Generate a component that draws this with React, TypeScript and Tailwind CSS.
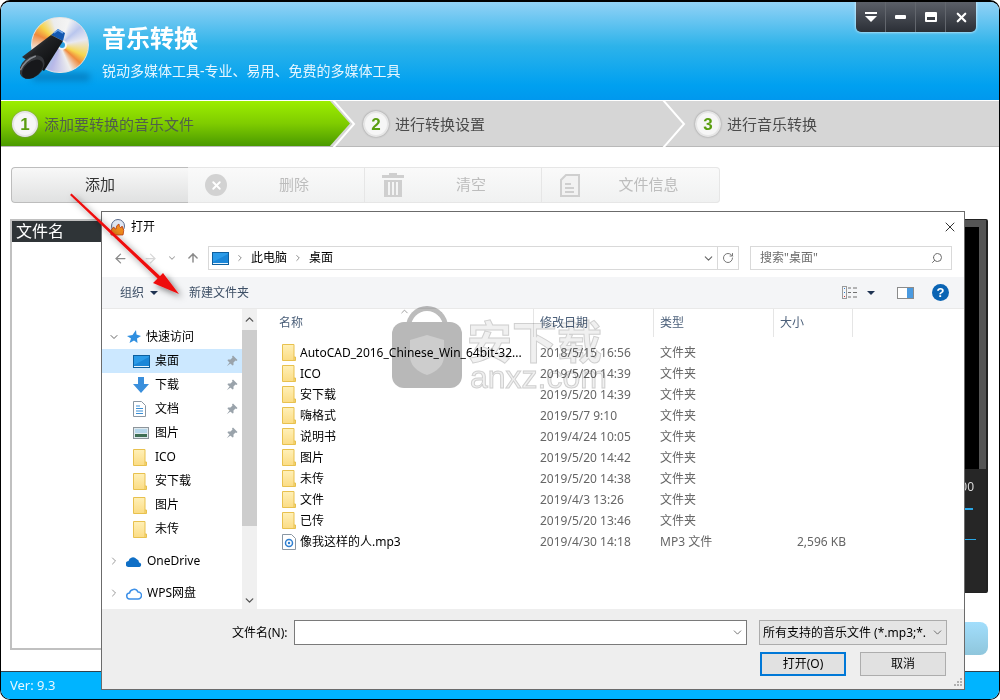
import { ArrowLeft, ArrowRight, ArrowUp, ChevronDown, ChevronRight, ChevronUp, RotateCw, Search, X } from "lucide-react"

const files = [
  ["AutoCAD_2016_Chinese_Win_64bit-32...", "2018/5/15 16:56"],
  ["ICO", "2019/5/20 14:39"],
  ["安下载", "2019/5/20 14:39"],
  ["嗨格式", "2019/5/7 9:10"],
  ["说明书", "2019/4/24 10:05"],
  ["图片", "2019/5/20 14:42"],
  ["未传", "2019/5/20 14:38"],
  ["文件", "2019/4/3 13:26"],
  ["已传", "2019/5/20 13:46"],
]

const Folder = () => (
  <svg width="14" height="17" viewBox="0 0 14 17" className="shrink-0">
    <defs>
      <linearGradient id="fd" x1="0" y1="0" x2="0" y2="1">
        <stop offset="0" stopColor="#fff0b8" />
        <stop offset="1" stopColor="#fbdc84" />
      </linearGradient>
    </defs>
    <path d="M.5.5h11.5v12.5h1.5v3.500H.5z" fill="url(#fd)" stroke="#e8c14e" />
    <path d="M12 13v3" stroke="#e8c14e" />
  </svg>
)

const Monitor = () => (
  <svg width="17" height="13" viewBox="0 0 17 13" className="shrink-0">
    <rect x=".5" y=".5" width="16" height="12" fill="#2b9be8" stroke="#0d5f9e" />
    <path d="M1 10 16 2v9H1z" fill="#1a86d8" />
    <path d="M1 11.500h15" stroke="#e8f4fc" />
  </svg>
)

const Pin = () => (
  <svg width="12" height="12" viewBox="0 0 12 12" fill="#9aa3ab">
    <path d="M7 .5 11.500 5 10.500 6 9.500 5.500 7.500 7.500 7.500 10 6.500 10.500 1.500 5.500 2 4.500 4.500 4.500 6.500 2.500 6 1.500zM3.500 7.500.8 11.200 4.500 8.500z" />
  </svg>
)

const Download = () => (
  <svg width="16" height="16" viewBox="0 0 16 16">
    <path d="M5 0h6v7h5l-8 9-8-9h5z" fill="#3a8fdc" />
  </svg>
)

const Doc = () => (
  <svg width="13" height="16" viewBox="0 0 13 16">
    <path d="M.5.5h8l4 4v11H.5z" fill="#fff" stroke="#8a97a3" />
    <path d="M3 5h4M3 7.500h7M3 10h7M3 12.500h7" stroke="#3b8fd6" />
  </svg>
)

const Picture = () => (
  <svg width="16" height="12" viewBox="0 0 16 12">
    <rect x=".5" y=".5" width="15" height="11" fill="#dfe9ee" stroke="#8d959b" />
    <path d="M2 7h12v3H2z" fill="#3f6f55" />
    <path d="M2 2h12v4H2z" fill="#b5d6ea" />
  </svg>
)

const Star = () => (
  <svg width="14" height="14" viewBox="0 0 14 14">
    <path d="M9 0 9.500 4.500 14 6 10 8.500 10.500 13 7 10.500 2.500 13 4 8.500 0 6 5.500 5z" fill="#2f8fe0" />
  </svg>
)

const OneDrive = () => (
  <svg width="16" height="11" viewBox="0 0 16 11">
    <path d="M3 11a3 3 0 0 1-.5-6A4.500 4.500 0 0 1 10.500 3 3.500 3.500 0 0 1 13 6.500 2.300 2.300 0 0 1 13.500 11z" fill="#0f6fc6" />
  </svg>
)

const WpsCloud = () => (
  <svg width="16" height="13" viewBox="0 0 16 13" fill="none" stroke="#3d90e8" strokeWidth="1.500">
    <path d="M4 12a3 3 0 0 1-.5-6A4.500 4.500 0 0 1 12 5a3.500 3.500 0 0 1 0 7z" />
  </svg>
)

const SideRow = ({ icon, label, pin, active }: { icon: React.ReactNode; label: string; pin?: boolean; active?: boolean }) => (
  <div className={`flex h-6 items-center pl-[31px] pr-[4px] ${active ? "bg-[#cce8ff]" : ""}`}>
    <span className="flex w-[22px] shrink-0 justify-start">{icon}</span>
    <span className="flex-1 text-black">{label}</span>
    {pin && <Pin />}
  </div>
)

const DiscLogo = () => (
  <div className="relative h-[72px] w-[72px] shrink-0">
    <div className="absolute left-[12px] top-[56px] h-[8px] w-[58px] rounded-full bg-[#005f9e]/50 blur-[3px]" />
    <div className="absolute left-[11px] top-0 h-[56px] w-[58px] rounded-full border border-[#e4e4e4] bg-[conic-gradient(from_20deg,#f4f4f4,#b9c6ee_8%,#e8e8f2_16%,#f7d750_26%,#f08a3c_31%,#eeeeee_38%,#b8b8e8_50%,#9fc4ea_56%,#f2f2f2_66%,#f08a3c_76%,#f7d34a_82%,#ececec_90%,#f4f4f4)]" />
    <svg width="72" height="72" viewBox="0 0 72 72" className="absolute left-0 top-0">
      <defs>
        <linearGradient id="tube" x1="0" y1="0" x2="1" y2="1">
          <stop offset="0" stopColor="#666a70" />
          <stop offset="0.4" stopColor="#1f2124" />
          <stop offset="1" stopColor="#050506" />
        </linearGradient>
      </defs>
      <circle cx="42" cy="28" r="5" fill="#f4f4f4" />
      <circle cx="42" cy="28" r="3" fill="#2a9fe0" />
      <path d="M31 18 38 12 45 16 43 24z" fill="#1358b0" />
      <path d="M34 16 38 13 43 16" stroke="#6ea4e6" strokeWidth="1.500" fill="none" />
      <path d="M31 18 43 24 24 54 2 40z" fill="url(#tube)" />
      <g transform="rotate(-40 12 50)">
        <ellipse cx="12" cy="50" rx="14" ry="10" fill="#34373b" />
        <ellipse cx="11" cy="52" rx="12" ry="7.500" fill="#17181b" />
        <path d="M1 45q10-5 21-1" stroke="#85898f" strokeWidth="1.500" fill="none" />
      </g>
    </svg>
  </div>
)

const StepBadge = ({ n }: { n: number }) => (
  <span className="flex h-[26px] w-[26px] shrink-0 items-center justify-center rounded-full border-2 border-[#e6e6e6] bg-[#f6f6f6] text-[17px] font-bold leading-none text-[#5a9e10] shadow-[0_0_2px_#888] [font-family:'Liberation_Sans',sans-serif]">
    {n}
  </span>
)

const Chevron = ({ className }: { className: string }) => (
  <svg width="24" height="46" viewBox="0 0 24 46" className={`absolute top-0 ${className}`} fill="none" stroke="#fff" strokeWidth="2">
    <path d="M1 -1 22 23 1 47" />
  </svg>
)

const ToolButton = ({ icon, label }: { icon: React.ReactNode; label: string }) => (
  <div className="flex h-full w-[177px] items-center border-r border-[#e6e6e6] pl-[16px] pr-[4px] last:border-r-0">
    <span className="flex w-[24px] justify-center">{icon}</span>
    <span className="flex-1 pb-[2px] text-center text-[#bdbdbd]">{label}</span>
  </div>
)

const RedArrow = () => (
  <svg width="1000" height="700" className="pointer-events-none absolute left-0 top-0">
    <defs>
      <filter id="as" x="-20%" y="-20%" width="150%" height="150%">
        <feDropShadow dx="3" dy="3" stdDeviation="3" floodColor="#000" floodOpacity="0.5" />
      </filter>
    </defs>
    <path filter="url(#as)" d="M70 195 71.500 193.500 160 276 163 273 179 294 153 283 157.500 278.500z" fill="#ee1111" />
  </svg>
)

const Watermark = () => (
  <div className="pointer-events-none absolute left-[392px] top-[306px] flex items-start gap-[5px] mix-blend-multiply">
    <div className="relative h-[82px] w-[70px]">
      <div className="absolute left-[14px] top-0 h-[34px] w-[42px] rounded-t-[21px] border-[5px] border-b-0 border-[#bcbcbc]" />
      <div className="absolute bottom-0 left-0 flex h-[66px] w-[70px] items-center justify-center rounded-[12px] bg-[#b8b8b8]">
        <svg width="36" height="42" viewBox="0 0 36 42">
          <path d="M18 1 35 6v16q0 13-17 19Q1 35 1 22V6z" fill="#cdcdcd" />
        </svg>
      </div>
    </div>
    <div className="flex flex-col text-[#f0f0f0] [-webkit-text-stroke:1px_#d0d0d0]">
      <span className="mt-[12px] text-[45px] font-bold leading-[48px]">安下载</span>
      <span className="-mt-[4px] ml-[3px] text-[32px] leading-[30px] [font-family:'Liberation_Sans',sans-serif]">anxz.com</span>
    </div>
  </div>
)

const OpenDialog = () => (
  <div className="absolute left-[101px] top-[211px] flex h-[479px] w-[864px] flex-col border border-[#6b6b6b] bg-white text-[12px] text-black">
    <div className="flex h-[30px] shrink-0 items-center pl-[8px] pr-[6px]">
      <svg width="16" height="17" viewBox="0 0 16 17" className="mr-[5px]">
        <circle cx="8" cy="7" r="6.500" fill="#dfe6f2" stroke="#5a6a8a" />
        <path d="M1 16q-1-6 3-8 0 2 2 2 0-4 3-5 0 3 2 4l1-2q3 4 1 9z" fill="#f08a1c" stroke="#b5300e" strokeWidth=".7" />
      </svg>
      <span className="flex-1">打开</span>
      <X size={16} strokeWidth={1.2} />
    </div>

    <div className="flex h-[35px] shrink-0 items-start pl-[11px] pr-[12px] pt-[4px]">
      <div className="flex h-[24px] w-[95px] items-center text-[#8a8a8a]">
        <ArrowLeft size={15} strokeWidth={2} />
        <ArrowRight size={15} strokeWidth={2} className="ml-[15px] text-[#d8d8d8]" />
        <ChevronDown size={10} strokeWidth={2.500} className="ml-[9px] text-[#a0a0a0]" />
        <ArrowUp size={14} strokeWidth={2.500} className="ml-[9px]" />
      </div>
      <div className="flex h-[24px] w-[531px] items-center border border-[#d9d9d9] pl-[3px]">
        <Monitor />
        <ChevronRight size={10} strokeWidth={2} className="ml-[6px] text-[#777]" />
        <span className="ml-[6px]">此电脑</span>
        <ChevronRight size={10} strokeWidth={2} className="ml-[6px] text-[#777]" />
        <span className="ml-[6px] flex-1">桌面</span>
        <ChevronDown size={13} strokeWidth={2} className="mr-[2px] text-[#666]" />
        <span className="flex h-full w-[21px] items-center justify-center border-l border-[#d9d9d9] text-[#777]">
          <RotateCw size={12} strokeWidth={2} />
        </span>
      </div>
      <div className="ml-[11px] flex h-[24px] w-[202px] items-center justify-between border border-[#d9d9d9] pl-[9px] pr-[8px] text-[#6d6d6d]">
        <span>搜索"桌面"</span>
        <Search size={12} strokeWidth={2} className="-scale-x-100" />
      </div>
    </div>

    <div className="flex h-[32px] shrink-0 items-center border-b border-[#e9e9e9] bg-[#f4f5f7] pl-[18px] pr-[15px] text-[#3d4f66]">
      <span>组织</span>
      <span className="ml-[6px] h-0 w-0 border-x-[4px] border-t-[4px] border-x-transparent border-t-[#1f3352]" />
      <span className="ml-[31px] flex-1">新建文件夹</span>
      <svg width="16" height="13" viewBox="0 0 16 13" fill="none">
        <rect x=".5" y=".5" width="4" height="12" stroke="#9a9a9a" />
        <path d="M6 2h3M11 2h4M6 6.500h3M11 6.500h4M6 11h3M11 11h4" stroke="#707070" />
        <path d="M2 2.500h1" stroke="#2f7fd0" />
        <path d="M2 6.500h1" stroke="#2f7fd0" />
        <path d="M2 10.500h1" stroke="#d03030" />
      </svg>
      <span className="ml-[9px] h-0 w-0 border-x-[4px] border-t-[4px] border-x-transparent border-t-[#1f3352]" />
      <span className="ml-[22px] flex h-[12px] w-[17px] border border-[#8b8b8b] bg-white">
        <span className="ml-auto w-[6px] bg-[#4a9ae0]" />
      </span>
      <span className="ml-[18px] flex h-[17px] w-[17px] items-center justify-center rounded-full bg-[#0a64b4] text-[13px] font-bold leading-none text-white [font-family:'Liberation_Sans',sans-serif]">
        ?
      </span>
    </div>

    <div className="flex min-h-0 flex-1">
      <aside className="flex w-[140px] shrink-0 flex-col overflow-hidden pt-[16px]">
        <div className="flex h-6 items-center pl-[6px]">
          <ChevronDown size={12} strokeWidth={2} className="mr-[7px] text-[#666]" />
          <Star />
          <span className="ml-[5px]">快速访问</span>
        </div>
        <SideRow icon={<Monitor />} label="桌面" pin active />
        <SideRow icon={<Download />} label="下载" pin />
        <SideRow icon={<Doc />} label="文档" pin />
        <SideRow icon={<Picture />} label="图片" pin />
        <SideRow icon={<Folder />} label="ICO" />
        <SideRow icon={<Folder />} label="安下载" />
        <SideRow icon={<Folder />} label="图片" />
        <SideRow icon={<Folder />} label="未传" />
        <div className="mt-[8px] flex h-6 items-center pl-[6px]">
          <ChevronRight size={12} strokeWidth={2} className="mr-[6px] text-[#999]" />
          <OneDrive />
          <span className="ml-[5px]">OneDrive</span>
        </div>
        <div className="mt-[8px] flex h-6 items-center pl-[6px]">
          <ChevronRight size={12} strokeWidth={2} className="mr-[6px] text-[#999]" />
          <WpsCloud />
          <span className="ml-[5px]">WPS网盘</span>
        </div>
      </aside>

      <div className="flex w-[15px] shrink-0 flex-col bg-[#f0f0f0] text-[#555]">
        <ChevronUp size={13} strokeWidth={2.500} className="mx-auto mt-[4px]" />
        <div className="mt-[4px] h-[196px] bg-[#cdcdcd]" />
        <ChevronDown size={13} strokeWidth={2.500} className="mx-auto mt-auto mb-[2px]" />
      </div>

      <div className="ml-[3px] min-w-0 flex-1">
        <div className="relative grid h-[28px] grid-cols-[273px_120px_120px_80px] items-center text-[#4c607a]">
          <span className="pl-[19px]">名称</span>
          <span className="flex h-full items-center border-l border-[#e5e5e5] pl-[6px]">修改日期</span>
          <span className="flex h-full items-center border-l border-[#e5e5e5] pl-[6px]">类型</span>
          <span className="flex h-full items-center border-x border-[#e5e5e5] pl-[6px]">大小</span>
          <ChevronUp size={11} strokeWidth={1.500} className="absolute left-[139px] top-[-3px] text-[#777]" />
        </div>
        <div className="pt-[5px]">
          {files.map(([name, date]) => (
            <div key={name} className="grid h-[21px] grid-cols-[273px_120px_120px_80px] items-center text-[#666]">
              <span className="flex items-center gap-[4px] pl-[22px] text-black">
                <Folder />
                {name}
              </span>
              <span className="pl-[7px]">{date}</span>
              <span className="pl-[7px]">文件夹</span>
              <span />
            </div>
          ))}
          <div className="grid h-[21px] grid-cols-[273px_120px_120px_80px] items-center text-[#666]">
            <span className="flex items-center gap-[4px] pl-[22px] text-black">
              <svg width="14" height="16" viewBox="0 0 14 16" className="shrink-0">
                <path d="M.5.500h9l4 4v11H.5z" fill="#fff" stroke="#8a97a3" />
                <circle cx="7" cy="9" r="3.500" fill="none" stroke="#2f7fd0" strokeWidth="1.500" />
                <circle cx="7" cy="9" r="1.200" fill="#2f7fd0" />
              </svg>
              像我这样的人.mp3
            </span>
            <span className="pl-[7px]">2019/4/30 14:18</span>
            <span className="pl-[7px]">MP3 文件</span>
            <span className="pr-[7px] text-right">2,596 KB</span>
          </div>
        </div>
      </div>
    </div>

    <div className="relative flex h-[80px] shrink-0 flex-col bg-[#eeeeee] pl-[130px] pr-[17px] pt-[11px]">
      <div className="flex items-center">
        <span className="w-[62px]">文件名(N):</span>
        <div className="flex h-[25px] w-[453px] items-center justify-end border border-[#7a7a7a] bg-white pr-[2px] text-[#555]">
          <ChevronDown size={13} strokeWidth={1.500} />
        </div>
        <div className="ml-[12px] flex h-[25px] flex-1 items-center justify-between border border-[#acacac] bg-[#e5e5e5] pl-[3px] pr-[2px]">
          <span className="whitespace-nowrap">所有支持的音乐文件 (*.mp3;*.</span>
          <ChevronDown size={13} strokeWidth={1.500} className="text-[#555]" />
        </div>
      </div>
      <div className="mr-px mt-[7px] flex justify-end gap-[14px]">
        <button className="h-[24px] w-[86px] border-2 border-[#0078d7] bg-[#e1e1e1]">打开(O)</button>
        <button className="h-[24px] w-[86px] border border-[#adadad] bg-[#e1e1e1]">取消</button>
      </div>
      <svg width="10" height="10" viewBox="0 0 10 10" className="absolute bottom-[1px] right-[1px]" fill="#b0b0b0">
        <path d="M7 0h2v2H7zM4 3h2v2H4zM7 3h2v2H7zM1 6h2v2H1zM4 6h2v2H4zM7 6h2v2H7z" />
      </svg>
    </div>
  </div>
)

export default function App() {
  return (
    <div className="relative h-[700px] w-[1000px] overflow-hidden bg-white [font-family:'Noto_Sans','Noto_Sans_CJK_SC',sans-serif]">
      <div className="flex h-full flex-col overflow-hidden rounded-[10px] border border-t-2 border-black">
        <header className="flex h-[98px] shrink-0 items-start justify-between bg-[linear-gradient(#92d2f6,#2db3ea_45%,#00a0f0_85%,#0098ee)] pl-[19px] pr-[23px]">
          <div className="flex items-start">
            <div className="mt-[15px]">
              <DiscLogo />
            </div>
            <div className="ml-[10px] flex flex-col text-white">
              <span className="mt-[18px] text-[24px] font-bold leading-[36px]">音乐转换</span>
              <span className="mt-[5px] text-[14px] leading-[20px] text-[#e6f6ff]">锐动多媒体工具-专业、易用、免费的多媒体工具</span>
            </div>
          </div>
          <div className="flex h-[30px] rounded-b-[5px] bg-[linear-gradient(#5b5f68,#2b2f36)] shadow-[0_0_3px_#fff]">
            <span className="flex w-[30px] flex-col items-center justify-center gap-[2px] border-r border-[#62666d]">
              <span className="h-[2px] w-[12px] bg-white" />
              <span className="h-0 w-0 border-x-[6px] border-t-[6px] border-x-transparent border-t-white" />
            </span>
            <span className="flex w-[30px] items-center justify-center border-r border-[#62666d]">
              <span className="h-[4px] w-[11px] rounded-[1px] bg-white" />
            </span>
            <span className="flex w-[30px] items-center justify-center border-r border-[#62666d]">
              <span className="flex h-[10px] w-[12px] items-end rounded-[1px] bg-white p-[2px] pt-0">
                <span className="h-[3px] w-full bg-[#3a3e45]" />
              </span>
            </span>
            <span className="flex w-[30px] items-center justify-center">
              <X size={15} strokeWidth={3.500} className="text-white" />
            </span>
          </div>
        </header>

        <nav className="relative mt-px flex h-[46px] shrink-0 border-b border-[#b9b9b9] bg-[#d6d6d6] text-[15px] text-[#4c4c4c]">
          <div className="flex w-[350px] shrink-0 items-center gap-[6px] bg-[linear-gradient(#9cee00,#7fcc00_50%,#4a9a00)] pl-[11px] pt-px text-[#50604a] [clip-path:polygon(0_0,329px_0,349px_50%,329px_100%,0_100%)]">
            <StepBadge n={1} />
            <span>添加要转换的音乐文件</span>
          </div>
          <Chevron className="left-[331px]" />
          <div className="ml-[12px] flex w-[320px] shrink-0 items-center gap-[6px] pt-px">
            <StepBadge n={2} />
            <span>进行转换设置</span>
          </div>
          <Chevron className="left-[661px]" />
          <div className="flex items-center gap-[6px] pl-[12px] pt-px">
            <StepBadge n={3} />
            <span>进行音乐转换</span>
          </div>
        </nav>

        <div className="flex min-h-0 flex-1 flex-col bg-white pl-[9px] pr-[11px]">
          <div className="ml-px mt-[20px] flex h-[36px] w-[709px] shrink-0 overflow-hidden rounded-[4px] bg-[linear-gradient(#fafafa,#f0f1f1)] text-[15px] shadow-[inset_0_0_0_1px_#e6e6e6]">
            <div className="flex h-full w-[177px] items-center justify-center rounded-l-[4px] border border-[#bdbdbd] border-r-0 bg-[linear-gradient(#f8f8f8,#e0e1e1)] pb-[2px] text-[#333]">
              添加
            </div>
            <ToolButton
              label="删除"
              icon={
                <span className="flex h-[22px] w-[22px] items-center justify-center rounded-full bg-[#d2d2d2]">
                  <X size={13} strokeWidth={3.500} className="text-white" />
                </span>
              }
            />
            <ToolButton
              label="清空"
              icon={
                <svg width="22" height="24" viewBox="0 0 22 24" fill="#cfcfcf">
                  <path d="M7 0h8v2h7v3H0V2h7zM2 7h18v17H2zM6 9v13h2V9zM10 9v13h2V9zM14 9v13h2V9z" fillRule="evenodd" />
                </svg>
              }
            />
            <ToolButton
              label="文件信息"
              icon={
                <svg width="20" height="23" viewBox="0 0 20 23">
                  <path d="M6 1h13v21H1V6z" fill="#f2f2f2" stroke="#cfcfcf" strokeWidth="2" />
                  <path d="M5 9h6v2H5zM5 13h9v2H5zM5 17h9v2H5z" fill="#cfcfcf" />
                </svg>
              }
            />
          </div>

          <div className="mt-[16px] flex min-h-0 items-start justify-between">
            <div className="h-[431px] w-[900px] border-2 border-[#c0c0c0]">
              <div className="h-[21px] w-[100px] bg-[#2f3437] pl-[4px] text-[16px] leading-[21px] text-white">文件名</div>
            </div>
            <div className="flex w-[60px] flex-col">
              <div className="flex h-[374px] flex-col rounded-[2px] border border-[#222] border-r-2 bg-[#262626]">
                <div className="h-[249px] border-r-[7px] border-t-[7px] border-[#555] bg-black" />
                <div className="relative flex-1 text-[12px] text-[#ddd]">
                  <span className="absolute right-[12px] top-[9px]">00</span>
                  <span className="absolute left-0 right-[13px] top-[39px] h-[2px] bg-[#2aa8e8]" />
                  <span className="absolute left-0 right-[10px] top-[70px] h-px bg-[#2aa8e8]" />
                </div>
              </div>
              <div className="ml-auto mt-[29px] h-[33px] w-[36px] rounded-[8px] bg-[linear-gradient(#a2defc,#8fc6dc)]" />
            </div>
          </div>

          <div className="flex-1" />
        </div>

        <footer className="flex h-[28px] shrink-0 items-center border-t border-[#30424d] bg-[#00b4ff] pl-[9px] text-[13px] text-[#e6f7ff]">Ver: 9.3</footer>
      </div>

      <OpenDialog />
      <Watermark />
      <RedArrow />
    </div>
  )
}
